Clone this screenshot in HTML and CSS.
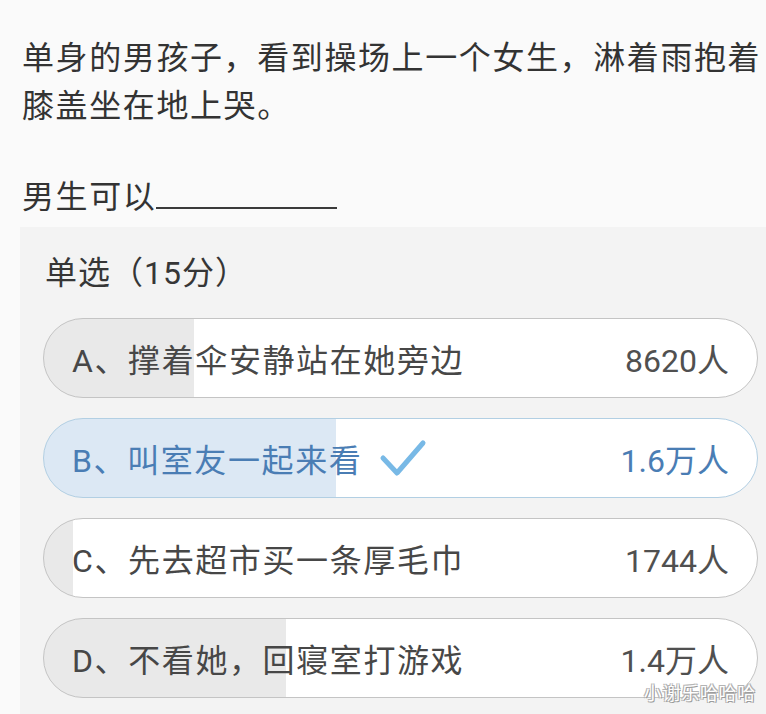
FILE: index.html
```html
<!DOCTYPE html>
<html lang="zh-CN">
<head>
<meta charset="utf-8">
<title>单选</title>
<link rel="stylesheet" href="styles.css">
</head>
<body>
<div class="page">
  <p class="question">单身的男孩子，看到操场上一个女生，淋着雨抱着膝盖坐在地上哭。</p>
  <p class="prompt">男生可以<span class="blank"></span></p>
  <section class="panel">
    <div class="panel-title">单选（15分）</div>
    <ul class="options">
      <li class="option" style="--p:21%">
        <span class="label">A、撑着伞安静站在她旁边</span>
        <span class="count">8620人</span>
      </li>
      <li class="option option-picked" style="--p:41%">
        <span class="label">B、叫室友一起来看<svg class="check" width="48" height="38" viewBox="0 0 48 38"><polyline points="4,19 18,34 44,4" fill="none" stroke="#78b9e6" stroke-width="5" stroke-linecap="round" stroke-linejoin="round"/></svg></span>
        <span class="count">1.6万人</span>
      </li>
      <li class="option" style="--p:4%">
        <span class="label">C、先去超市买一条厚毛巾</span>
        <span class="count">1744人</span>
      </li>
      <li class="option" style="--p:34%">
        <span class="label">D、不看她，回寝室打游戏</span>
        <span class="count">1.4万人</span>
      </li>
    </ul>
  </section>
  <div class="watermark">小谢乐哈哈哈</div>
</div>
</body>
</html>
```

FILE: styles.css
```css
html, body {
  margin: 0;
  padding: 0;
  background: #fafafa;
}

.page {
  position: relative;
  width: 766px;
  height: 714px;
  overflow: hidden;
  font-family: Roboto, "Noto Sans CJK SC", "Noto Sans", sans-serif;
  font-weight: 400;
  color: #333333;
}

.question,
.prompt {
  margin: 0;
  padding-left: 22px;
  font-size: 32px;
  letter-spacing: 1.6px;
  line-height: 48px;
}

.question {
  padding-top: 34px;
}

.prompt {
  margin-top: 43px;
}

.blank {
  display: inline-block;
  width: 181px;
  height: 0;
  border-bottom: 2px solid #3a3a3a;
  vertical-align: -1px;
}

.panel {
  margin: 6px 0 0 20px;
  padding: 22px 8px 20px 23px;
  background: #f3f3f3;
}

.panel-title {
  padding-left: 2px;
  font-size: 32px;
  letter-spacing: 1px;
  line-height: 48px;
  color: #363636;
  margin-bottom: 21px;
}

.options {
  list-style: none;
  margin: 0;
  padding: 0;
  display: flex;
  flex-direction: column;
  gap: 20px;
}

.option {
  --fill: #e9e9e9;
  height: 80px;
  box-sizing: border-box;
  display: flex;
  align-items: center;
  justify-content: space-between;
  padding: 0 28px 0 28px;
  border: 1px solid #c4c4c4;
  border-radius: 40px;
  background: linear-gradient(90deg, var(--fill) var(--p), #ffffff var(--p));
  font-size: 32px;
  letter-spacing: 1.6px;
  color: #474747;
}

.option-picked {
  --fill: #dce8f4;
  border-color: #b2cfe3;
  color: #4a7db4;
}

.label {
  display: flex;
  align-items: center;
  white-space: nowrap;
}

.check {
  margin-left: 17px;
  display: block;
}

.count {
  white-space: nowrap;
  letter-spacing: 0;
  color: #505050;
}

.option-picked .count {
  color: #4a7db4;
}

.watermark {
  position: absolute;
  right: 10px;
  bottom: 9px;
  font-size: 18px;
  letter-spacing: 0.7px;
  line-height: 22px;
  color: #ffffff;
  text-shadow: 1px 1px 0 #9c9c9c, -1px -1px 0 #b4b4b4, 1px -1px 0 #b4b4b4, -1px 1px 0 #b4b4b4;
}
```
